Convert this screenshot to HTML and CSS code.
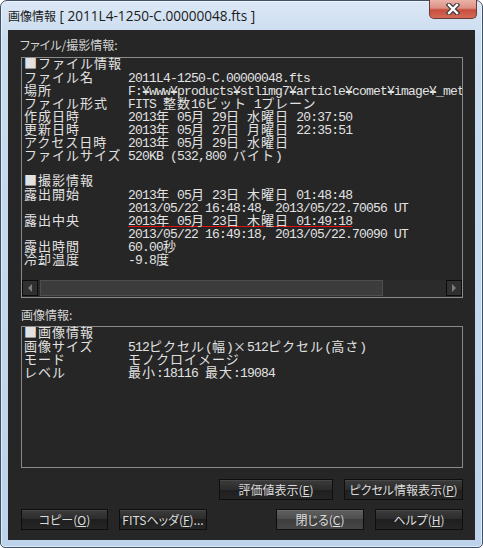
FILE: index.html
```html
<!DOCTYPE html>
<html lang="ja">
<head>
    <meta charset="UTF-8">
    <meta name="viewport" content="width=device-width, initial-scale=1.0">
    <title>画像情報</title>
    <link rel="stylesheet" href="styles.css">
</head>
<body>
    <div class="window">
        <div class="titlebar">
            <div class="title"><span class="title-jp">画像情報</span> [ 2011L4-1250-C.00000048.fts ]</div>
            <div class="close-btn">
                <svg width="14" height="12" viewBox="0 0 14 12">
                    <path d="M3 2 L11 10 M11 2 L3 10" stroke="#3a3a3a" stroke-width="4.6" stroke-linecap="square"/>
                    <path d="M3 2 L11 10 M11 2 L3 10" stroke="#ffffff" stroke-width="2.4" stroke-linecap="square"/>
                </svg>
            </div>
        </div>

        <div class="client">
            <div class="caption caption-file">ファイル/撮影情報:</div>
            <div class="box file-box">
                <div class="lines">
                    <div class="row"><span class="head">■ファイル情報</span></div>
                    <div class="row"><span class="k">ファイル名</span><span class="v">2011L4-1250-C.00000048.fts</span></div>
                    <div class="row"><span class="k">場所</span><span class="v">F:¥www¥products¥stlimg7¥article¥comet¥image¥_met</span></div>
                    <div class="row"><span class="k">ファイル形式</span><span class="v">FITS <span class="j">整数</span>16<span class="j">ビット</span> 1<span class="j">プレーン</span></span></div>
                    <div class="row"><span class="k">作成日時</span><span class="v">2013<span class="j">年</span> 05<span class="j">月</span> 29<span class="j">日</span> <span class="j">水曜日</span> 20:37:50</span></div>
                    <div class="row"><span class="k">更新日時</span><span class="v">2013<span class="j">年</span> 05<span class="j">月</span> 27<span class="j">日</span> <span class="j">月曜日</span> 22:35:51</span></div>
                    <div class="row"><span class="k">アクセス日時</span><span class="v">2013<span class="j">年</span> 05<span class="j">月</span> 29<span class="j">日</span> <span class="j">水曜日</span></span></div>
                    <div class="row"><span class="k">ファイルサイズ</span><span class="v">520KB (532,800 <span class="j">バイト</span>)</span></div>
                    <div class="row"></div>
                    <div class="row"><span class="head">■撮影情報</span></div>
                    <div class="row"><span class="k">露出開始</span><span class="v">2013<span class="j">年</span> 05<span class="j">月</span> 23<span class="j">日</span> <span class="j">木曜日</span> 01:48:48</span></div>
                    <div class="row"><span class="k"></span><span class="v">2013/05/22 16:48:48, 2013/05/22.70056 UT</span></div>
                    <div class="row"><span class="k">露出中央</span><span class="v mark">2013<span class="j">年</span> 05<span class="j">月</span> 23<span class="j">日</span> <span class="j">木曜日</span> 01:49:18</span></div>
                    <div class="row"><span class="k"></span><span class="v">2013/05/22 16:49:18, 2013/05/22.70090 UT</span></div>
                    <div class="row"><span class="k">露出時間</span><span class="v">60.00<span class="j">秒</span></span></div>
                    <div class="row"><span class="k">冷却温度</span><span class="v">-9.8<span class="j">度</span></span></div>
                </div>
                <div class="hscroll">
                    <div class="arrow">
                        <svg width="8" height="10" viewBox="0 0 8 10"><polygon points="6,1 2,5 6,9" fill="#7c7c7c"/></svg>
                    </div>
                    <div class="thumb"></div>
                    <div class="track"></div>
                    <div class="arrow">
                        <svg width="8" height="10" viewBox="0 0 8 10"><polygon points="2,1 6,5 2,9" fill="#7c7c7c"/></svg>
                    </div>
                </div>
            </div>

            <div class="caption caption-image">画像情報:</div>
            <div class="box image-box">
                <div class="row"><span class="head">■画像情報</span></div>
                <div class="row"><span class="k">画像サイズ</span><span class="v">512<span class="j">ピクセル</span>(<span class="j">幅</span>)<span class="j">×</span>512<span class="j">ピクセル</span>(<span class="j">高さ</span>)</span></div>
                <div class="row"><span class="k">モード</span><span class="v"><span class="j">モノクロイメージ</span></span></div>
                <div class="row"><span class="k">レベル</span><span class="v"><span class="j">最小</span>:18116 <span class="j">最大</span>:19084</span></div>
            </div>

            <div class="btn-row btn-row-top">
                <div class="btn btn-eval">評価値表示(<u>E</u>)</div>
                <div class="btn btn-pixel">ピクセル情報表示(<u>P</u>)</div>
            </div>
            <div class="btn-row btn-row-bottom">
                <div class="btn">コピー(<u>O</u>)</div>
                <div class="btn btn-fits">FITSヘッダ(<u>F</u>)...</div>
                <div class="btn btn-close">閉じる(<u>C</u>)</div>
                <div class="btn btn-help">ヘルプ(<u>H</u>)</div>
            </div>
        </div>
    </div>
</body>
</html>
```

FILE: styles.css
```css
body {
    margin: 0;
    background: #ffffff;
}

.window {
    width: 483px;
    height: 548px;
    box-sizing: border-box;
    border: 1px solid #3f5169;
    border-radius: 7px 7px 5px 5px;
    padding: 0 7px 7px;
    background: linear-gradient(#dbe7f5, #c9dcf0 40px, #bdd3eb);
    box-shadow: inset 0 0 0 1px rgba(255, 255, 255, 0.55);
    font-family: "Noto Sans CJK JP", sans-serif;
}

.titlebar {
    height: 29px;
    display: flex;
    align-items: flex-start;
}

.title {
    margin-top: 7px;
    font: 13.6px/16px "Open Sans", "Noto Sans CJK JP", sans-serif;
    color: #1b1b1b;
    white-space: nowrap;
}

.title-jp {
    font-family: "Noto Sans CJK JP", sans-serif;
    font-size: 12px;
}

.close-btn {
    margin: -1px -2px 0 auto;
    width: 48px;
    height: 19px;
    box-sizing: border-box;
    border: 1px solid #6d3b35;
    border-top: none;
    border-radius: 0 0 5px 5px;
    background: linear-gradient(#ebb3a8, #dc9083 45%, #c74e3d 55%, #d56b57);
    display: flex;
    align-items: center;
    justify-content: center;
}

.client {
    height: 510px;
    box-sizing: border-box;
    padding: 7px 12px 0 13px;
    background: #262626;
}

.caption {
    font-size: 12px;
    line-height: 16px;
    color: #d4d4d4;
    font-feature-settings: "palt";
}

.caption-file {
    margin: 0 0 4px -1px;
}

.caption-image {
    margin: 9px 0 3px;
}

.box {
    border: 1px solid #8a8a8a;
    box-sizing: border-box;
}

.file-box {
    height: 241px;
    display: flex;
    flex-direction: column;
}

.lines {
    flex: 1;
    overflow-x: clip;
}

.image-box {
    height: 142px;
}

/* text rows: half-width glyphs 7px, full-width 14px, 13px pitch */
.row {
    display: flex;
    align-items: baseline;
    height: 13px;
    padding-left: 2px;
    white-space: nowrap;
    color: #e2e2e2;
    font: 13px/15.2px "Liberation Mono", "Noto Sans CJK JP", monospace;
    letter-spacing: -0.8px;
}

.k, .head, .j {
    font-family: "Noto Sans CJK JP", sans-serif;
    font-size: 13px;
    line-height: 10.8px;
    letter-spacing: 1px;
}

.k {
    width: 104px;
    flex: none;
}

.v {
    flex: none;
    height: 13px;
}

.mark {
    box-shadow: inset 0 -1px #e01010;
}

/* horizontal scrollbar of the file panel */
.hscroll {
    height: 17px;
    display: flex;
    background: #2b2b2b;
}

.arrow {
    width: 16px;
    height: 16px;
    box-sizing: border-box;
    border: 1px solid #0c0c0c;
    background: #303030;
    display: flex;
    align-items: center;
    justify-content: center;
}

.thumb {
    width: 343px;
    margin: 0 1px 1px 2px;
    box-sizing: border-box;
    border: 1px solid #4e4e4e;
    background: #3c3c3c;
}

.track {
    flex: 1;
}

/* buttons */
.btn-row {
    display: flex;
    gap: 11px;
}

.btn-row-top {
    justify-content: flex-end;
    margin-top: 11px;
}

.btn-row-bottom {
    margin-top: 9px;
}

.btn {
    width: 87px;
    height: 21px;
    box-sizing: border-box;
    border: 1px solid #0e0e0e;
    background: linear-gradient(#3c3c3c, #2b2b2b 50%, #1f1f1f 50%, #252525);
    box-shadow: inset 0 1px rgba(255, 255, 255, 0.07);
    color: #dcdcdc;
    font-size: 12px;
    line-height: 19px;
    text-align: center;
    font-feature-settings: "palt";
}

.btn-eval {
    width: 114px;
}

.btn-pixel {
    width: 119px;
}

.btn-fits,
.btn-help {
    width: 88px;
}

.btn-close {
    width: 88px;
    margin-left: auto;
    background: linear-gradient(#606060, #4c4c4c 50%, #3e3e3e 50%, #464646);
}
```
